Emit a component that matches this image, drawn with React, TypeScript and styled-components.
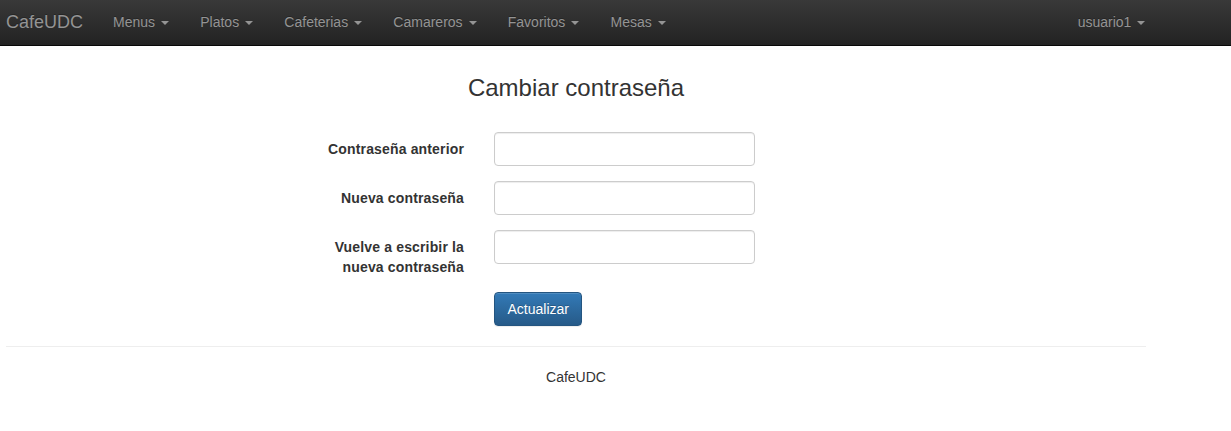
import styled, { createGlobalStyle } from 'styled-components'

const GlobalStyle = createGlobalStyle`
  html, body {
    margin: 0;
    padding: 0;
    background: #fff;
  }
  body {
    font-family: "Liberation Sans", Arial, Helvetica, sans-serif;
    font-size: 14px;
    line-height: 1.42857143;
    color: #333;
  }
  * {
    box-sizing: border-box;
  }
`

const Navbar = styled.nav`
  height: 46px;
  background: linear-gradient(to bottom, #393939 0, #222 100%);
  border-bottom: 1px solid #080808;
`

const NavContainer = styled.div`
  width: 1140px;
  margin-left: 6px;
  height: 43px;
  display: flex;
  align-items: center;
  justify-content: space-between;
`

const NavLeft = styled.div`
  display: flex;
  align-items: center;
`

const Brand = styled.a`
  font-size: 18px;
  line-height: 20px;
  color: #949494;
  text-decoration: none;
  padding-right: 14.4px;
  text-shadow: 0 -1px 0 rgba(0, 0, 0, 0.25);
`

const NavList = styled.ul`
  display: flex;
  list-style: none;
  margin: 0;
  padding: 0;
`

const NavRight = styled(NavList)`
  margin-right: -15px;
`

const NavLink = styled.a`
  display: block;
  padding: 0 15.6px;
  line-height: 20px;
  color: #949494;
  text-decoration: none;
  text-shadow: 0 -1px 0 rgba(0, 0, 0, 0.25);
`

const Caret = styled.span`
  display: inline-block;
  width: 0;
  height: 0;
  margin-left: 6px;
  vertical-align: middle;
  border-top: 4px solid;
  border-right: 4px solid transparent;
  border-left: 4px solid transparent;
`

const Main = styled.main`
  width: 1140px;
  margin-left: 6px;
`

const Title = styled.h3`
  margin: 29px 0 0;
  font-size: 24px;
  font-weight: 500;
  line-height: 26px;
  text-align: center;
  color: #333;
`

const Form = styled.form`
  margin: 31px 0 0 293px;
  display: flex;
  flex-direction: column;
  gap: 15px;
`

const FormRow = styled.div`
  display: grid;
  grid-template-columns: 165px 261px;
  column-gap: 30px;
  align-items: start;
`

const Label = styled.label`
  padding-top: 7px;
  font-weight: bold;
  text-align: right;
  line-height: 20px;
  letter-spacing: 0.15px;
`

const Input = styled.input`
  display: block;
  height: 34px;
  width: 100%;
  padding: 6px 12px;
  font: inherit;
  color: #555;
  background: #fff;
  border: 1px solid #ccc;
  border-radius: 4px;
  box-shadow: inset 0 1px 1px rgba(0, 0, 0, 0.075);
`

const Button = styled.button`
  grid-column: 2;
  justify-self: start;
  height: 34px;
  padding: 6px 12.5px;
  font: inherit;
  line-height: 20px;
  color: #fff;
  background: linear-gradient(to bottom, #337ab7 0, #265a88 100%);
  border: 1px solid #245580;
  border-radius: 4px;
  text-shadow: 0 -1px 0 rgba(0, 0, 0, 0.2);
  box-shadow: inset 0 1px 0 rgba(255, 255, 255, 0.15), 0 1px 1px rgba(0, 0, 0, 0.075);
  cursor: pointer;
`

const Divider = styled.hr`
  margin: 20px 0 0;
  border: 0;
  border-top: 1px solid #eee;
`

const Footer = styled.footer`
  margin-top: 20px;
  text-align: center;
  line-height: 20px;
`

const menus = ['Menus', 'Platos', 'Cafeterias', 'Camareros', 'Favoritos', 'Mesas']

const fields = [
  { id: 'old', label: 'Contraseña anterior' },
  { id: 'new', label: 'Nueva contraseña' },
  { id: 'repeat', label: 'Vuelve a escribir la nueva contraseña' },
]

const App = () => {
  return (
    <>
      <GlobalStyle />
      <Navbar>
        <NavContainer>
          <NavLeft>
            <Brand href="#">CafeUDC</Brand>
            <NavList>
              {menus.map(m => (
                <li key={m}>
                  <NavLink href="#">
                    {m}
                    <Caret />
                  </NavLink>
                </li>
              ))}
            </NavList>
          </NavLeft>
          <NavRight>
            <li>
              <NavLink href="#">
                usuario1
                <Caret />
              </NavLink>
            </li>
          </NavRight>
        </NavContainer>
      </Navbar>
      <Main>
        <Title>Cambiar contraseña</Title>
        <Form onSubmit={e => e.preventDefault()}>
          {fields.map(f => (
            <FormRow key={f.id}>
              <Label htmlFor={f.id}>{f.label}</Label>
              <Input id={f.id} type="password" />
            </FormRow>
          ))}
          <FormRow>
            <Button type="submit">Actualizar</Button>
          </FormRow>
        </Form>
        <Divider />
        <Footer>CafeUDC</Footer>
      </Main>
    </>
  )
}

export default App
